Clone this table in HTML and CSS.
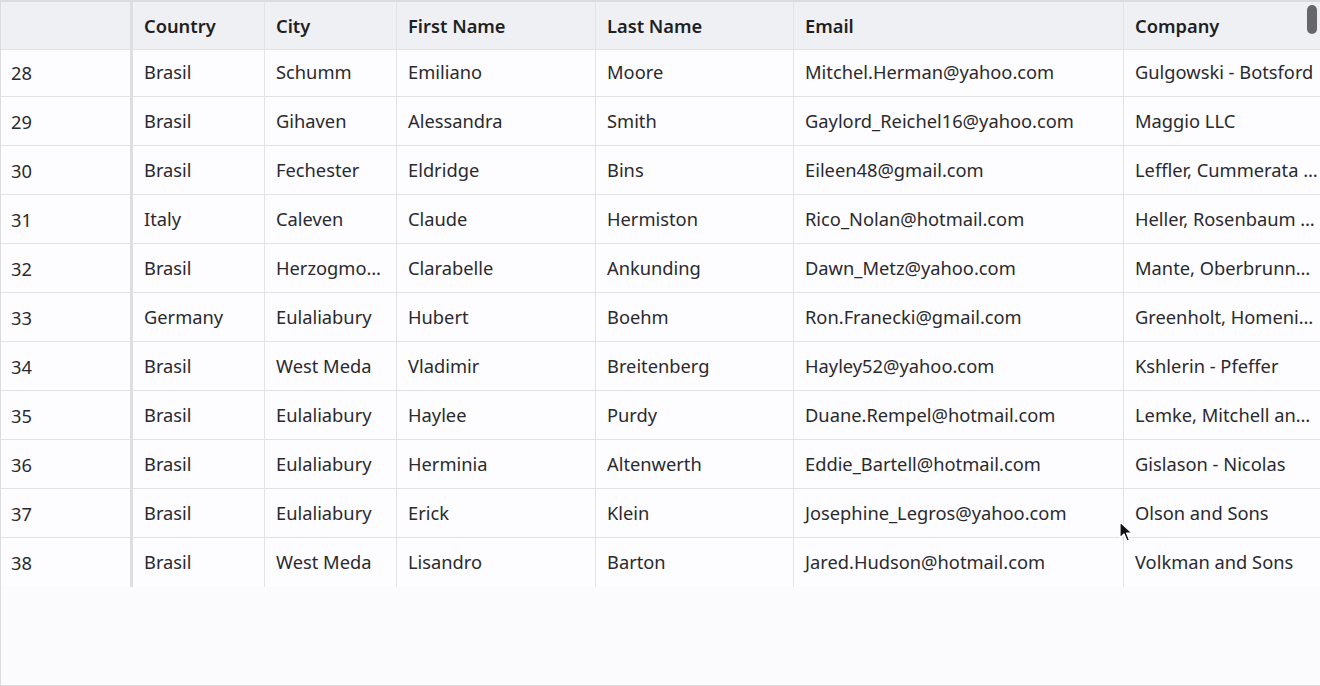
FILE: index.html
```html
<!DOCTYPE html>
<html>
<head>
<meta charset="utf-8">
<link rel="stylesheet" href="styles.css">
</head>
<body>
<div class="grid">
  <div class="row head">
    <div class="cell idx"></div>
    <div class="cell">Country</div>
    <div class="cell">City</div>
    <div class="cell">First Name</div>
    <div class="cell">Last Name</div>
    <div class="cell">Email</div>
    <div class="cell">Company</div>
  </div>
  <div class="body">
    <div class="row"><div class="cell idx">28</div><div class="cell">Brasil</div><div class="cell">Schumm</div><div class="cell">Emiliano</div><div class="cell">Moore</div><div class="cell">Mitchel.Herman@yahoo.com</div><div class="cell">Gulgowski - Botsford</div></div>
    <div class="row"><div class="cell idx">29</div><div class="cell">Brasil</div><div class="cell">Gihaven</div><div class="cell">Alessandra</div><div class="cell">Smith</div><div class="cell">Gaylord_Reichel16@yahoo.com</div><div class="cell">Maggio LLC</div></div>
    <div class="row"><div class="cell idx">30</div><div class="cell">Brasil</div><div class="cell">Fechester</div><div class="cell">Eldridge</div><div class="cell">Bins</div><div class="cell">Eileen48@gmail.com</div><div class="cell">Leffler, Cummerata and Schuster</div></div>
    <div class="row"><div class="cell idx">31</div><div class="cell">Italy</div><div class="cell">Caleven</div><div class="cell">Claude</div><div class="cell">Hermiston</div><div class="cell">Rico_Nolan@hotmail.com</div><div class="cell">Heller, Rosenbaum and Ward</div></div>
    <div class="row"><div class="cell idx">32</div><div class="cell">Brasil</div><div class="cell">Herzogmouth</div><div class="cell">Clarabelle</div><div class="cell">Ankunding</div><div class="cell">Dawn_Metz@yahoo.com</div><div class="cell">Mante, Oberbrunner and Kunde</div></div>
    <div class="row"><div class="cell idx">33</div><div class="cell">Germany</div><div class="cell">Eulaliabury</div><div class="cell">Hubert</div><div class="cell">Boehm</div><div class="cell">Ron.Franecki@gmail.com</div><div class="cell">Greenholt, Homenick and Hills</div></div>
    <div class="row"><div class="cell idx">34</div><div class="cell">Brasil</div><div class="cell">West Meda</div><div class="cell">Vladimir</div><div class="cell">Breitenberg</div><div class="cell">Hayley52@yahoo.com</div><div class="cell">Kshlerin - Pfeffer</div></div>
    <div class="row"><div class="cell idx">35</div><div class="cell">Brasil</div><div class="cell">Eulaliabury</div><div class="cell">Haylee</div><div class="cell">Purdy</div><div class="cell">Duane.Rempel@hotmail.com</div><div class="cell">Lemke, Mitchell and Hane</div></div>
    <div class="row"><div class="cell idx">36</div><div class="cell">Brasil</div><div class="cell">Eulaliabury</div><div class="cell">Herminia</div><div class="cell">Altenwerth</div><div class="cell">Eddie_Bartell@hotmail.com</div><div class="cell">Gislason - Nicolas</div></div>
    <div class="row"><div class="cell idx">37</div><div class="cell">Brasil</div><div class="cell">Eulaliabury</div><div class="cell">Erick</div><div class="cell">Klein</div><div class="cell">Josephine_Legros@yahoo.com</div><div class="cell">Olson and Sons</div></div>
    <div class="row last"><div class="cell idx">38</div><div class="cell">Brasil</div><div class="cell">West Meda</div><div class="cell">Lisandro</div><div class="cell">Barton</div><div class="cell">Jared.Hudson@hotmail.com</div><div class="cell">Volkman and Sons</div></div>
  </div>
  <div class="scrollbar"></div>
  <svg class="cursor" width="14" height="22" viewBox="0 0 14 22"><path d="M1 1 L1 17 L5 13 L8 20 L10.5 19 L7.5 12 L13 12 Z" fill="#111" stroke="#fff" stroke-width="1.2" stroke-linejoin="round"/></svg>
</div>
</body>
</html>
```
FILE: styles.css
```css
html, body {
  margin: 0;
  padding: 0;
  background: #fbfbfd;
}
body {
  font-family: "Noto Sans", "Open Sans", sans-serif;
  font-size: 18.3px;
  color: #2a2a2e;
}
.grid {
  position: relative;
  width: 1319px;
  height: 683px;
  border-left: 1px solid #dcdce0;
  border-top: 2px solid #dcdce0;
  border-bottom: 1px solid #dcdce0;
  overflow: hidden;
  background: #fbfbfd;
}
.row {
  display: grid;
  grid-template-columns: 132px 132px 132px 199px 198px 330px 196px;
  width: 1319px;
  height: 49px;
  background: #fdfcff;
}
.cell {
  box-sizing: border-box;
  padding: 0 0 0 11px;
  display: flex;
  align-items: center;
  border-right: 1px solid #e3e3e7;
  border-bottom: 1px solid #e3e3e7;
  white-space: nowrap;
  overflow: hidden;
}
.cell.idx {
  padding-left: 10px;
  border-right: 3px solid #dedee2;
}
.cell:not(.idx) {
  display: block;
  line-height: 47px;
  text-overflow: ellipsis;
  padding-right: 14px;
}
.row .cell:last-child {
  padding-right: 1px;
  border-right: none;
}
.head {
  position: relative;
  z-index: 1;
  height: 48px;
  background: #eff0f4;
  font-weight: 600;
  color: #1f1f23;
}
.head .cell {
  line-height: 47px;
}
.body {
  margin-top: -2px;
}
.row.last .cell {
  border-bottom: none;
}
.scrollbar {
  position: absolute;
  z-index: 2;
  top: 3px;
  left: 1306px;
  width: 10px;
  height: 29px;
  border-radius: 5px;
  background: #67676b;
}
.cursor {
  position: absolute;
  z-index: 2;
  left: 1118px;
  top: 519px;
}
```
